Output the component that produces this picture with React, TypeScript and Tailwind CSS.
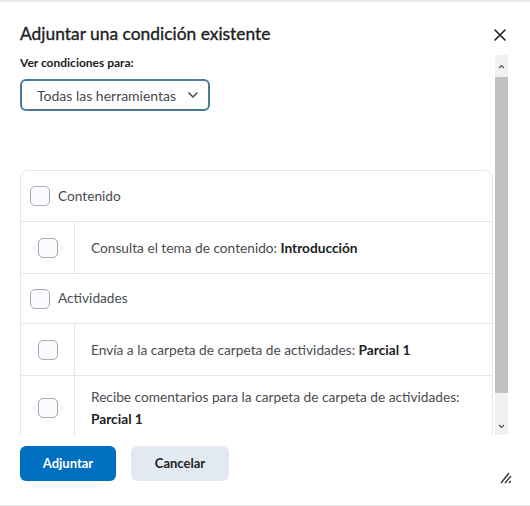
import React from "react";

const Box = () => (
  <div className="w-[20px] h-[20px] rounded-[5px] border border-[#a7abb0] bg-[#f9fbff] shrink-0" />
);

const GroupRow = ({ label, first }: { label: string; first?: boolean }) => (
  <div className={`flex items-center h-[50px] pl-[9px] gap-[8px] ${first ? "" : "border-t border-[#e3e5e8]"}`}>
    <Box />
    <span>{label}</span>
  </div>
);

const ItemRow = ({ children, tall }: { children: React.ReactNode; tall?: boolean }) => (
  <div className="flex border-t border-[#e3e5e8]">
    <div className={`w-[54px] shrink-0 flex items-center justify-center border-r border-[#e3e5e8] ${tall ? "min-h-[62px]" : "h-[51px]"}`}>
      <Box />
    </div>
    <div className={`flex-1 pl-[16px] pr-[20px] flex items-center leading-[22px] ${tall ? "py-[10px]" : ""}`}>
      <div>{children}</div>
    </div>
  </div>
);

export default function App() {
  return (
    <div
      className="w-[530px] h-[506px] bg-white border-t-2 border-b border-[#e8e8e8] flex flex-col text-[#494c4e] overflow-hidden"
      style={{ fontFamily: "Lato, 'Noto Sans', sans-serif" }}
    >
      <div className="flex items-start justify-between pl-[20px] pr-[24px] pt-[20px] h-[53px] shrink-0">
        <h1 className="text-[17.4px] font-normal text-[#202122] leading-[24px] [-webkit-text-stroke:0.35px_#202122]">Adjuntar una condición existente</h1>
        <svg width="12" height="12" viewBox="0 0 12 12" className="mt-[7px]">
          <path d="M1 1 L11 11 M11 1 L1 11" stroke="#202122" strokeWidth="1.6" strokeLinecap="round" />
        </svg>
      </div>
      <div className="flex h-[380px] shrink-0">
        <div className="flex-1 overflow-hidden pl-[20px] pr-[2px]">
          <div className="text-[12px] font-bold text-[#202122] leading-[16px]">Ver condiciones para:</div>
          <div className="mt-[8px] w-[190px] h-[32px] rounded-[6px] border-2 border-[#4b7a99] flex items-center pl-[15px] pr-[10px] justify-between text-[14px]">
            <span>Todas las herramientas</span>
            <svg width="10" height="6" viewBox="0 0 10 6">
              <path d="M1 1 L5 5 L9 1" stroke="#494c4e" strokeWidth="1.6" fill="none" strokeLinecap="round" strokeLinejoin="round" />
            </svg>
          </div>
          <div className="mt-[59px] border border-[#e3e5e8] rounded-t-[8px] text-[13.7px]">
            <GroupRow label="Contenido" first />
            <ItemRow>
              Consulta el tema de contenido: <b className="text-[#202122]">Introducción</b>
            </ItemRow>
            <GroupRow label="Actividades" />
            <ItemRow>
              Envía a la carpeta de carpeta de actividades: <b className="text-[#202122]">Parcial 1</b>
            </ItemRow>
            <ItemRow tall>
              Recibe comentarios para la carpeta de carpeta de actividades: <b className="text-[#202122]">Parcial 1</b>
            </ItemRow>
          </div>
        </div>
        <div className="w-[13px] mr-[22px] flex flex-col bg-[#f1f1f1]">
          <div className="h-[22px] flex items-center justify-center">
            <svg width="7" height="5" viewBox="0 0 7 5">
              <path d="M1 4 L3.5 1.5 L6 4" stroke="#505050" strokeWidth="1.2" fill="none" />
            </svg>
          </div>
          <div className="h-[316px] bg-[#c1c1c1]" />
          <div className="flex-1 flex items-end justify-center pb-[6px]">
            <svg width="7" height="5" viewBox="0 0 7 5">
              <path d="M1 1 L3.5 3.5 L6 1" stroke="#505050" strokeWidth="1.2" fill="none" />
            </svg>
          </div>
        </div>
      </div>
      <div className="flex items-start pl-[20px] pr-[18px] pt-[11px] gap-[15px]">
        <button className="w-[96px] h-[35px] rounded-[6px] bg-[#006fbf] text-white text-[13px] font-bold">Adjuntar</button>
        <button className="w-[98px] h-[35px] rounded-[6px] bg-[#e3e9f1] text-[#202122] text-[13px] font-bold">Cancelar</button>
        <div className="flex-1" />
        <svg width="12" height="12" viewBox="0 0 12 12" className="mt-[26px]">
          <path d="M1 11 L9 1 M5 11 L11 4 M9 11 L11 9" stroke="#303030" strokeWidth="1.3" />
        </svg>
      </div>
    </div>
  );
}
